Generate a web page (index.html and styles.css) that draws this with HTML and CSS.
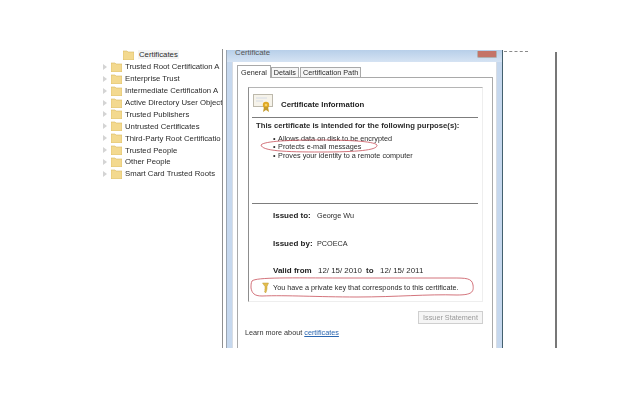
FILE: index.html
```html
<!DOCTYPE html>
<html lang="en">
<head>
<meta charset="utf-8">
<title>Certificate</title>
<link rel="stylesheet" href="styles.css">
</head>
<body>
<div class="stage">
  <div class="tree">
    <div class="row child"><svg class="folder" viewBox="0 0 11 10"><path d="M0 1h4l1 1h6v8H0z" fill="#f3d98f" stroke="#d9b862" stroke-width=".6"/></svg><span class="sel">Certificates</span></div>
    <div class="row"><i class="arrow"></i><svg class="folder" viewBox="0 0 11 10"><path d="M0 1h4l1 1h6v8H0z" fill="#f3d98f" stroke="#d9b862" stroke-width=".6"/></svg><span>Trusted Root Certification A</span></div>
    <div class="row"><i class="arrow"></i><svg class="folder" viewBox="0 0 11 10"><path d="M0 1h4l1 1h6v8H0z" fill="#f3d98f" stroke="#d9b862" stroke-width=".6"/></svg><span>Enterprise Trust</span></div>
    <div class="row"><i class="arrow"></i><svg class="folder" viewBox="0 0 11 10"><path d="M0 1h4l1 1h6v8H0z" fill="#f3d98f" stroke="#d9b862" stroke-width=".6"/></svg><span>Intermediate Certification A</span></div>
    <div class="row"><i class="arrow"></i><svg class="folder" viewBox="0 0 11 10"><path d="M0 1h4l1 1h6v8H0z" fill="#f3d98f" stroke="#d9b862" stroke-width=".6"/></svg><span>Active Directory User Object</span></div>
    <div class="row"><i class="arrow"></i><svg class="folder" viewBox="0 0 11 10"><path d="M0 1h4l1 1h6v8H0z" fill="#f3d98f" stroke="#d9b862" stroke-width=".6"/></svg><span>Trusted Publishers</span></div>
    <div class="row"><i class="arrow"></i><svg class="folder" viewBox="0 0 11 10"><path d="M0 1h4l1 1h6v8H0z" fill="#f3d98f" stroke="#d9b862" stroke-width=".6"/></svg><span>Untrusted Certificates</span></div>
    <div class="row"><i class="arrow"></i><svg class="folder" viewBox="0 0 11 10"><path d="M0 1h4l1 1h6v8H0z" fill="#f3d98f" stroke="#d9b862" stroke-width=".6"/></svg><span>Third-Party Root Certificatio</span></div>
    <div class="row"><i class="arrow"></i><svg class="folder" viewBox="0 0 11 10"><path d="M0 1h4l1 1h6v8H0z" fill="#f3d98f" stroke="#d9b862" stroke-width=".6"/></svg><span>Trusted People</span></div>
    <div class="row"><i class="arrow"></i><svg class="folder" viewBox="0 0 11 10"><path d="M0 1h4l1 1h6v8H0z" fill="#f3d98f" stroke="#d9b862" stroke-width=".6"/></svg><span>Other People</span></div>
    <div class="row"><i class="arrow"></i><svg class="folder" viewBox="0 0 11 10"><path d="M0 1h4l1 1h6v8H0z" fill="#f3d98f" stroke="#d9b862" stroke-width=".6"/></svg><span>Smart Card Trusted Roots</span></div>
  </div>

  <div class="window">
    <div class="titlebar"><span class="wintitle">Certificate</span><span class="close"></span></div>
    <div class="client">
      <div class="tabs">
        <span class="tab active">General</span>
        <span class="tab">Details</span>
        <span class="tab">Certification Path</span>
      </div>
      <div class="tabpanel">
        <div class="info">
          <div class="info-head">
            <svg class="cert" viewBox="0 0 20 18">
              <rect x=".5" y=".5" width="19" height="12" fill="#f6f3ea" stroke="#bdb9ac"/>
              <path d="M3 4h11M3 7h7" stroke="#d6dce6"/>
              <circle cx="13" cy="11" r="3.2" fill="#dfa823"/>
              <path d="M11 13l-1 5 3-2 3 2-1-5z" fill="#c39a2c"/>
              <circle cx="13" cy="11" r="1.3" fill="#f5d36d"/>
            </svg>
            <b class="info-title">Certificate Information</b>
          </div>
          <div class="rule"></div>
          <p class="purpose">This certificate is intended for the following purpose(s):</p>
          <ul class="purposes">
            <li>Allows data on disk to be encrypted</li>
            <li>Protects e-mail messages</li>
            <li>Proves your identity to a remote computer</li>
          </ul>
          <div class="rule lower"></div>
          <div class="field"><b class="label">Issued to:</b><span>George Wu</span></div>
          <div class="field"><b class="label">Issued by:</b><span>PCOECA</span></div>
          <div class="field valid"><b class="label">Valid from</b><span class="date">12/ 15/ 2010</span><b class="to">to</b><span class="date">12/ 15/ 2011</span></div>
          <div class="key">
            <svg class="keyicon" viewBox="0 0 7 11"><path d="M.5 1h6L5 4.500v2.500L4 10.500H3l-.5-1 .6-.8-.6-.7.5-.7V4.500z" fill="#e2bd4e" stroke="#c09c3a" stroke-width=".5"/></svg>
            <span>You have a private key that corresponds to this certificate.</span>
          </div>
        </div>
        <div class="actions"><span class="button">Issuer Statement</span></div>
        <div class="learn">Learn more about <a class="link">certificates</a></div>
      </div>
    </div>
  </div>
  <div class="scrap"></div>
  <div class="edge"></div>

  <svg class="marks" viewBox="0 0 640 400">
    <path d="M261 145c3-4 30-5 58-5 26 0 55 1 58 5 1 5-18 7-56 7-36 0-59-1-60-7z"/>
    <path d="M252 281c4-4 40-3 90-3h110c14 0 20 0 21 7 1 7-1 10-16 10-30-1-60 2-100 2-40 0-70-2-95-1-8 0-10-3-11-8 0-3 0-5 1-7z"/>
  </svg>
</div>
</body>
</html>
```
FILE: styles.css
```css
html, body { margin: 0; padding: 0; background: #fff; }
.stage {
  position: relative;
  width: 640px;
  height: 400px;
  overflow: hidden;
  font-family: "Liberation Sans", Arial, sans-serif;
  font-size: 7.25px;
  color: #2b2b2b;
  filter: blur(0.4px);
}
.tree {
  position: absolute;
  left: 100px;
  top: 49px;
  width: 122px;
  height: 299px;
  border-right: 1px solid #8f8f8f;
  overflow: hidden;
  font-size: 7.75px;
}
.row {
  display: flex;
  align-items: center;
  height: 11.9px;
  white-space: nowrap;
  gap: 3px;
}
.row.child { padding-left: 23px; gap: 4px; }
.arrow {
  width: 0;
  height: 0;
  margin: 0 1px 0 3px;
  border-left: 4px solid #d4d4d4;
  border-top: 3px solid transparent;
  border-bottom: 3px solid transparent;
  flex: none;
}
.folder { width: 11px; height: 10px; flex: none; }
.sel { background: #f4f4f4; padding: 0 1px; }
.window {
  position: absolute;
  left: 226px;
  top: 50px;
  width: 277px;
  height: 298px;
  box-sizing: border-box;
  background: #c6d8ee;
  border-left: 1px solid #9aa4b0;
  border-right: 1px solid #44606e;
  padding: 0 5px;
  display: flex;
  flex-direction: column;
}
.titlebar {
  height: 12px;
  flex: none;
  display: flex;
  justify-content: space-between;
  background: linear-gradient(#b7cfe9, #d5e3f3);
  margin: 0 -5px;
  padding: 0 5px 0 8px;
  line-height: 6px;
  overflow: hidden;
  color: #555;
}
.wintitle { font-size: 7.8px; }
.close {
  width: 20px;
  height: 7px;
  margin-top: 1px;
  background: #c47468;
  border: 1px solid #b0b0b0;
  border-top: 0;
  border-radius: 0 0 2px 2px;
  box-sizing: border-box;
}
.client {
  flex: 1;
  background: #fff;
  padding: 3px 3px 0 9px;
  display: flex;
  flex-direction: column;
  border: 1px solid #d8dde4;
  border-bottom: 0;
  border-top: 0;
  min-height: 0;
}
.tabs { display: flex; height: 12px; flex: none; position: relative; z-index: 1; margin-left: -5px; }
.tab {
  border: 1px solid #a9a9a9;
  border-bottom: 0;
  margin-top: 2px;
  margin-right: 1px;
  padding: 0 2px;
  background: #f6f6f6;
  line-height: 9px;
  white-space: nowrap;
}
.tab.active {
  margin-top: 0;
  margin-right: 0;
  margin-bottom: -1px;
  padding: 2px 3px 0;
  background: #fff;
}
.tabpanel {
  flex: 1;
  border: 1px solid #a9a9a9;
  border-bottom: 0;
  padding: 9px 9px 0 10px;
  margin-left: -5px;
  min-height: 0;
}
.info {
  height: 213px;
  border-left: 1px solid #8d8d8d;
  border-top: 1px solid #b5b5b5;
  border-right: 1px solid #eee;
  border-bottom: 1px solid #eee;
  padding: 0 3px;
  display: flex;
  flex-direction: column;
}
.info-head { display: flex; align-items: center; height: 29px; padding-left: 1px; gap: 8px; flex: none; }
.cert { width: 20px; height: 18px; flex: none; }
.info-title { font-size: 7.8px; color: #222; margin-top: 4px; }
.rule { height: 1px; background: #7d7d7d; flex: none; margin-right: 1px; }
.rule.lower { margin-top: 43.2px; }
.purpose {
  margin: 3px 0 0 4px;
  font-weight: 700;
  font-size: 7.7px;
  line-height: 10px;
  white-space: nowrap;
}
.purposes {
  margin: 3.500px 0 0 21px;
  padding: 0;
  list-style: none;
  line-height: 8.6px;
}
.purposes li::before { content: "\2022"; margin-right: 2.5px; }
.field {
  display: flex;
  height: 28px;
  padding: 7px 0 0 21px;
  box-sizing: border-box;
  flex: none;
  line-height: 10px;
  white-space: nowrap;
}
.field .label { width: 44px; font-size: 8px; color: #222; }
.field.valid { height: 21px; padding-top: 6px; }
.field.valid .label { width: 45px; }
.date { width: 48px; font-size: 7.9px; }
.to { width: 14px; font-size: 8px; }
.key {
  display: flex;
  align-items: center;
  gap: 4px;
  height: 12px;
  padding-left: 10px;
  white-space: nowrap;
}
.keyicon { width: 7px; height: 11px; flex: none; }
.actions { display: flex; justify-content: flex-end; padding: 9px 0 0; }
.button {
  box-sizing: border-box;
  width: 65px;
  height: 13px;
  text-align: center;
  border: 1px solid #cfcfcf;
  background: #f5f5f5;
  color: #9a9a9a;
  line-height: 11px;
  white-space: nowrap;
}
.learn { margin: 4px 0 0 -3px; line-height: 10px; color: #333; }
.link { color: #2a66b0; text-decoration: underline; }
.scrap {
  position: absolute;
  left: 504px;
  top: 51px;
  width: 24px;
  border-top: 1px dashed #8a8a8a;
}
.edge {
  position: absolute;
  left: 555px;
  top: 52px;
  width: 2px;
  height: 296px;
  background: #777;
}
.marks {
  position: absolute;
  left: 0;
  top: 0;
  width: 640px;
  height: 400px;
  fill: none;
  stroke: #c8505a;
  stroke-width: .8;
}
```
